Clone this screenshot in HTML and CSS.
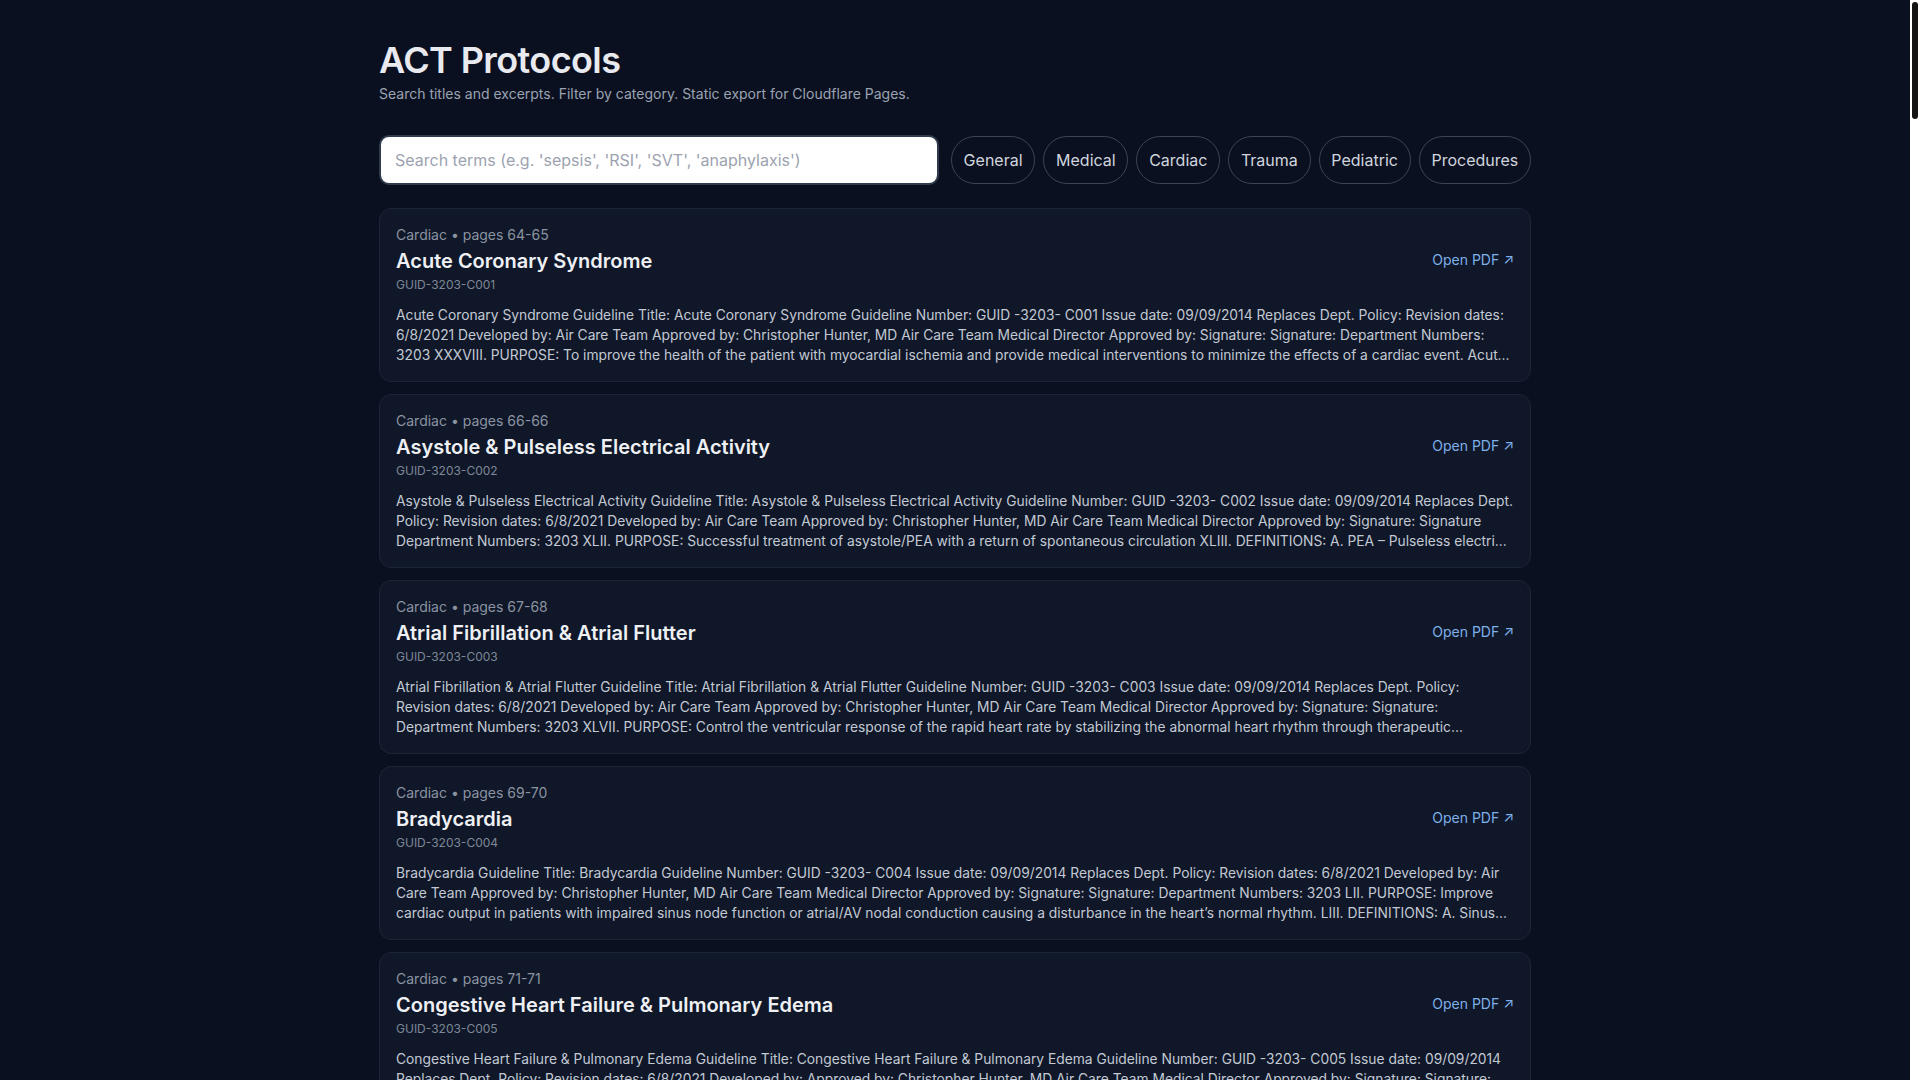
FILE: index.html
```html
<!DOCTYPE html>
<html lang="en">
<head>
<meta charset="utf-8">
<title>ACT Protocols</title>
<link rel="stylesheet" href="styles.css">
</head>
<body>
<main class="wrap">
  <header class="head">
    <h1 class="title">ACT Protocols</h1>
    <p class="sub">Search titles and excerpts. Filter by category. Static export for Cloudflare Pages.</p>
  </header>

  <div class="controls">
    <input class="search" type="text" placeholder="Search terms (e.g. 'sepsis', 'RSI', 'SVT', 'anaphylaxis')">
    <div class="chips">
      <button class="chip">General</button>
      <button class="chip">Medical</button>
      <button class="chip">Cardiac</button>
      <button class="chip">Trauma</button>
      <button class="chip">Pediatric</button>
      <button class="chip">Procedures</button>
    </div>
  </div>

  <section class="list">
    <article class="card">
      <div class="card-top">
        <div class="card-info">
          <div class="meta">Cardiac • pages 64-65</div>
          <h2 class="card-title">Acute Coronary Syndrome</h2>
          <div class="guid">GUID-3203-C001</div>
        </div>
        <a class="open" href="#">Open PDF <span class="arrow">↗</span></a>
      </div>
      <p class="excerpt">Acute Coronary Syndrome Guideline Title: Acute Coronary Syndrome Guideline Number: GUID -3203- C001 Issue date: 09/09/2014 Replaces Dept. Policy: Revision dates: 6/8/2021 Developed by: Air Care Team Approved by: Christopher Hunter, MD Air Care Team Medical Director Approved by: Signature: Signature: Department Numbers: 3203 XXXVIII. PURPOSE: To improve the health of the patient with myocardial ischemia and provide medical interventions to minimize the effects of a cardiac event. Acute coronary syndrome refers to a spectrum of clinical presentations ranging from unstable angina to myocardial infarction.</p>
    </article>

    <article class="card">
      <div class="card-top">
        <div class="card-info">
          <div class="meta">Cardiac • pages 66-66</div>
          <h2 class="card-title">Asystole &amp; Pulseless Electrical Activity</h2>
          <div class="guid">GUID-3203-C002</div>
        </div>
        <a class="open" href="#">Open PDF <span class="arrow">↗</span></a>
      </div>
      <p class="excerpt">Asystole &amp; Pulseless Electrical Activity Guideline Title: Asystole &amp; Pulseless Electrical Activity Guideline Number: GUID -3203- C002 Issue date: 09/09/2014 Replaces Dept. Policy: Revision dates: 6/8/2021 Developed by: Air Care Team Approved by: Christopher Hunter, MD Air Care Team Medical Director Approved by: Signature: Signature Department Numbers: 3203 XLII. PURPOSE: Successful treatment of asystole/PEA with a return of spontaneous circulation XLIII. DEFINITIONS: A. PEA – Pulseless electrical activity is the presence of organized electrical activity without a palpable pulse.</p>
    </article>

    <article class="card">
      <div class="card-top">
        <div class="card-info">
          <div class="meta">Cardiac • pages 67-68</div>
          <h2 class="card-title">Atrial Fibrillation &amp; Atrial Flutter</h2>
          <div class="guid">GUID-3203-C003</div>
        </div>
        <a class="open" href="#">Open PDF <span class="arrow">↗</span></a>
      </div>
      <p class="excerpt">Atrial Fibrillation &amp; Atrial Flutter Guideline Title: Atrial Fibrillation &amp; Atrial Flutter Guideline Number: GUID -3203- C003 Issue date: 09/09/2014 Replaces Dept. Policy: Revision dates: 6/8/2021 Developed by: Air Care Team Approved by: Christopher Hunter, MD Air Care Team Medical Director Approved by: Signature: Signature: Department Numbers: 3203 XLVII. PURPOSE: Control the ventricular response of the rapid heart rate by stabilizing the abnormal heart rhythm through therapeutic interventions and pharmacological management.</p>
    </article>

    <article class="card">
      <div class="card-top">
        <div class="card-info">
          <div class="meta">Cardiac • pages 69-70</div>
          <h2 class="card-title">Bradycardia</h2>
          <div class="guid">GUID-3203-C004</div>
        </div>
        <a class="open" href="#">Open PDF <span class="arrow">↗</span></a>
      </div>
      <p class="excerpt">Bradycardia Guideline Title: Bradycardia Guideline Number: GUID -3203- C004 Issue date: 09/09/2014 Replaces Dept. Policy: Revision dates: 6/8/2021 Developed by: Air Care Team Approved by: Christopher Hunter, MD Air Care Team Medical Director Approved by: Signature: Signature: Department Numbers: 3203 LII. PURPOSE: Improve cardiac output in patients with impaired sinus node function or atrial/AV nodal conduction causing a disturbance in the heart’s normal rhythm. LIII. DEFINITIONS: A. Sinus bradycardia is a heart rate of less than 60 beats per minute.</p>
    </article>

    <article class="card">
      <div class="card-top">
        <div class="card-info">
          <div class="meta">Cardiac • pages 71-71</div>
          <h2 class="card-title">Congestive Heart Failure &amp; Pulmonary Edema</h2>
          <div class="guid">GUID-3203-C005</div>
        </div>
        <a class="open" href="#">Open PDF <span class="arrow">↗</span></a>
      </div>
      <p class="excerpt">Congestive Heart Failure &amp; Pulmonary Edema Guideline Title: Congestive Heart Failure &amp; Pulmonary Edema Guideline Number: GUID -3203- C005 Issue date: 09/09/2014 Replaces Dept. Policy: Revision dates: 6/8/2021 Developed by: Approved by: Christopher Hunter, MD Air Care Team Medical Director Approved by: Signature: Signature: Department Numbers: 3203 LVII. PURPOSE: To improve oxygenation and reduce the workload of the heart in patients with congestive heart failure and pulmonary edema.</p>
    </article>
  </section>
</main>
<div class="scrollbar" aria-hidden="true"><div class="scrollbar-thumb"></div></div>
</body>
</html>
```

FILE: styles.css
```css
html {
  background: #0b1020;
}
body {
  margin: 0 10px 0 0;
  background: #0b1020;
  color: #e5e7eb;
  font-family: Inter, "Noto Sans", "Liberation Sans", sans-serif;
}
.scrollbar {
  position: fixed;
  top: 0;
  right: 0;
  width: 10px;
  height: 100vh;
  background: #ffffff;
}
.scrollbar-thumb {
  margin: 2px 2px 0 2px;
  height: 117px;
  border-radius: 4px;
  background: #141414;
}
.wrap {
  max-width: 1152px;
  margin: 0 auto;
  padding: 40px 0 40px;
}
.head {
  display: flex;
  flex-direction: column;
  gap: 4px;
}
.title {
  margin: 0;
  font-size: 36px;
  line-height: 40px;
  font-weight: 600;
  letter-spacing: -0.6px;
  color: #e8eaef;
}
.sub {
  margin: 0;
  font-size: 14px;
  line-height: 20px;
  color: #9aa3b2;
}
.controls {
  margin-top: 31px;
  display: flex;
  align-items: center;
  gap: 12px;
}
.search {
  flex: 1;
  height: 50px;
  box-sizing: border-box;
  border: 2px solid #2f3a4c;
  border-radius: 10px;
  background: #ffffff;
  padding: 0 14px;
  font-family: inherit;
  font-size: 16px;
  color: #111827;
  outline: none;
}
.search::placeholder {
  color: #9ca3af;
}
.chips {
  display: flex;
  gap: 8px;
}
.chip {
  height: 48px;
  padding: 0 11.75px;
  border: 1px solid #3a4455;
  border-radius: 999px;
  background: transparent;
  color: #d0d5de;
  font-family: inherit;
  font-size: 16px;
}
.list {
  margin-top: 23px;
  display: flex;
  flex-direction: column;
  gap: 12px;
}
.card {
  border: 1px solid #1c2536;
  border-radius: 12px;
  background: #0f1729;
  padding: 16px;
}
.card-top {
  display: flex;
  align-items: center;
  justify-content: space-between;
  gap: 16px;
}
.card-info {
  display: flex;
  flex-direction: column;
  gap: 2px;
}
.meta {
  font-size: 14px;
  line-height: 20px;
  color: #8b93a1;
}
.card-title {
  margin: 0;
  font-size: 20px;
  line-height: 28px;
  font-weight: 600;
  color: #eef0f4;
}
.guid {
  font-size: 12px;
  line-height: 16px;
  color: #7f8897;
}
.open {
  font-size: 14px;
  line-height: 20px;
  color: #7fb0ea;
  text-decoration: none;
  margin-top: 2px;
}
.arrow {
  font-size: 14px;
}
.excerpt {
  margin: 12px 0 0;
  font-size: 13.8px;
  line-height: 20px;
  color: #c3c9d3;
  display: -webkit-box;
  -webkit-line-clamp: 3;
  -webkit-box-orient: vertical;
  overflow: hidden;
}
```
